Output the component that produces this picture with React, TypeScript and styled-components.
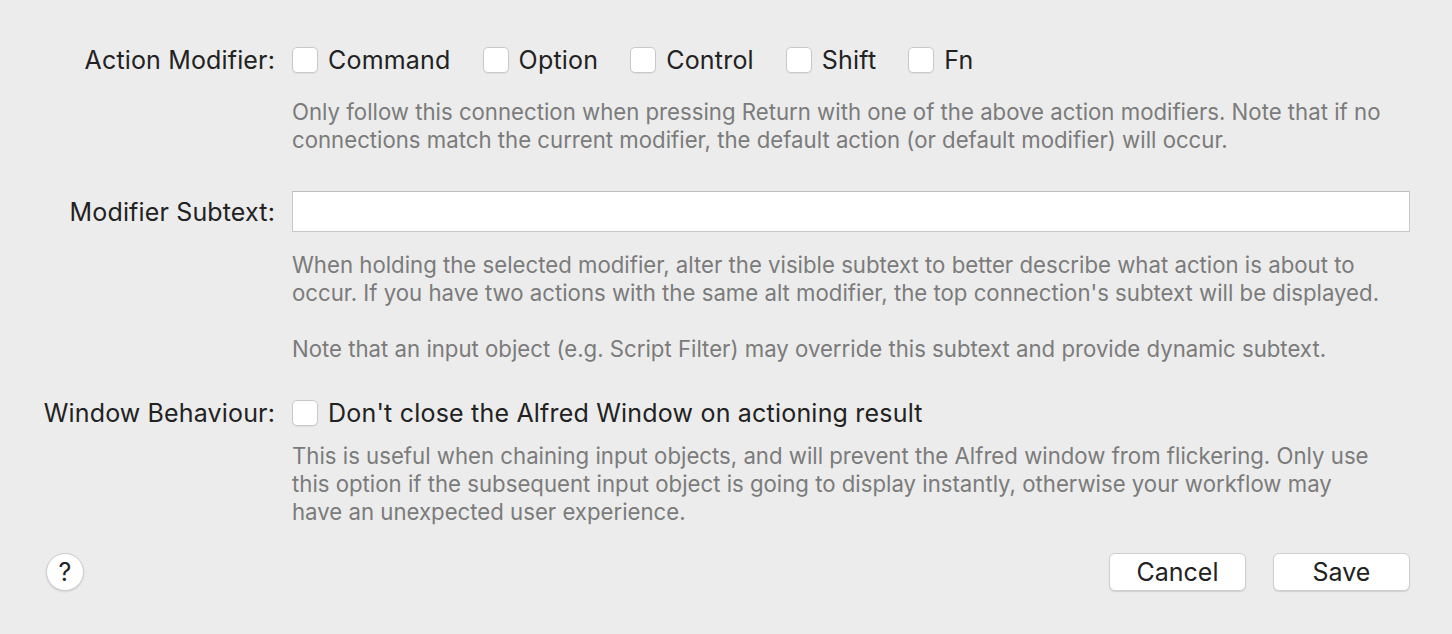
import React from 'react';
import styled, {createGlobalStyle} from "styled-components";

const Global = createGlobalStyle`
  html, body {
    margin: 0;
    padding: 0;
    background: #ececec;
    font-family: Inter, "Noto Sans", sans-serif;
    -webkit-font-smoothing: antialiased;
  }
`

const Page = styled.div`
  width: 1452px;
  height: 634px;
  box-sizing: border-box;
  padding: 45px 42px 0 0;
  display: flex;
  flex-direction: column;
`

const Row = styled.div<{ $top?: number }>`
  display: grid;
  grid-template-columns: 275px 1fr;
  column-gap: 17px;
  align-items: center;
  min-height: 30px;
  margin-top: ${p => p.$top || 0}px;
`

const Label = styled.div`
  text-align: right;
  font-size: 25px;
  letter-spacing: 0.15px;
  line-height: 30px;
  color: #222;
  white-space: nowrap;
`

const Help = styled.div<{ $top?: number }>`
  margin-left: 292px;
  margin-top: ${p => p.$top || 0}px;
  font-size: 22.2px;
  line-height: 28px;
  color: #7b7b7b;
  white-space: nowrap;

  p {
    margin: 0;
  }

  p + p {
    margin-top: 28px;
  }
`

const Options = styled.div`
  display: flex;
  align-items: center;
  gap: 32px;
`

const Check = styled.label`
  display: flex;
  align-items: center;
  gap: 10px;
  font-size: 25px;
  letter-spacing: 0.2px;
  line-height: 30px;
  color: #222;
  white-space: nowrap;
`

const Box = styled.span`
  width: 26px;
  height: 26px;
  box-sizing: border-box;
  border: 1px solid #c9c9c9;
  border-radius: 5px;
  background: #fff;
  box-shadow: 0 1px 1px rgba(0, 0, 0, 0.06);
`

const TextInput = styled.input`
  height: 41px;
  box-sizing: border-box;
  border: 1px solid #c8c8c8;
  border-top-color: #bdbdbd;
  background: #fff;
  outline: none;
  font: inherit;
  font-size: 21px;
  padding: 0 8px;
`

const Footer = styled.div`
  margin-top: 27px;
  padding-left: 46px;
  display: flex;
  align-items: center;
`

const HelpButton = styled.button`
  width: 38px;
  height: 38px;
  border-radius: 50%;
  border: 1px solid #cdcdcd;
  background: #fff;
  box-shadow: 0 1px 2px rgba(0, 0, 0, 0.12);
  font-family: inherit;
  font-size: 25px;
  color: #222;
  padding: 0;
  display: flex;
  align-items: center;
  justify-content: center;
`

const Buttons = styled.div`
  margin-left: auto;
  display: flex;
  gap: 27px;
`

const Button = styled.button`
  width: 137px;
  height: 38px;
  border-radius: 6px;
  border: 1px solid #cfcfcf;
  background: #fff;
  box-shadow: 0 1px 1px rgba(0, 0, 0, 0.12);
  font-family: inherit;
  font-size: 25px;
  color: #222;
`

const modifiers = ['Command', 'Option', 'Control', 'Shift', 'Fn']

const App = () => {
    return (
        <Page>
            <Global/>
            <Row>
                <Label>Action Modifier:</Label>
                <Options>
                    {modifiers.map(m => <Check key={m}><Box/>{m}</Check>)}
                </Options>
            </Row>
            <Help $top={23}>
                <p>Only follow this connection when pressing Return with one of the above action modifiers. Note that if no<br/>
                    connections match the current modifier, the default action (or default modifier) will occur.</p>
            </Help>
            <Row $top={37}>
                <Label>Modifier Subtext:</Label>
                <TextInput/>
            </Row>
            <Help $top={19}>
                <p>When holding the selected modifier, alter the visible subtext to better describe what action is about to<br/>
                    occur. If you have two actions with the same alt modifier, the top connection's subtext will be displayed.</p>
                <p>Note that an input object (e.g. Script Filter) may override this subtext and provide dynamic subtext.</p>
            </Help>
            <Row $top={35}>
                <Label>Window Behaviour:</Label>
                <Options>
                    <Check><Box/>Don't close the Alfred Window on actioning result</Check>
                </Options>
            </Row>
            <Help $top={14}>
                <p>This is useful when chaining input objects, and will prevent the Alfred window from flickering. Only use<br/>
                    this option if the subsequent input object is going to display instantly, otherwise your workflow may<br/>
                    have an unexpected user experience.</p>
            </Help>
            <Footer>
                <HelpButton>?</HelpButton>
                <Buttons>
                    <Button>Cancel</Button>
                    <Button>Save</Button>
                </Buttons>
            </Footer>
        </Page>
    );
};

export default App;
